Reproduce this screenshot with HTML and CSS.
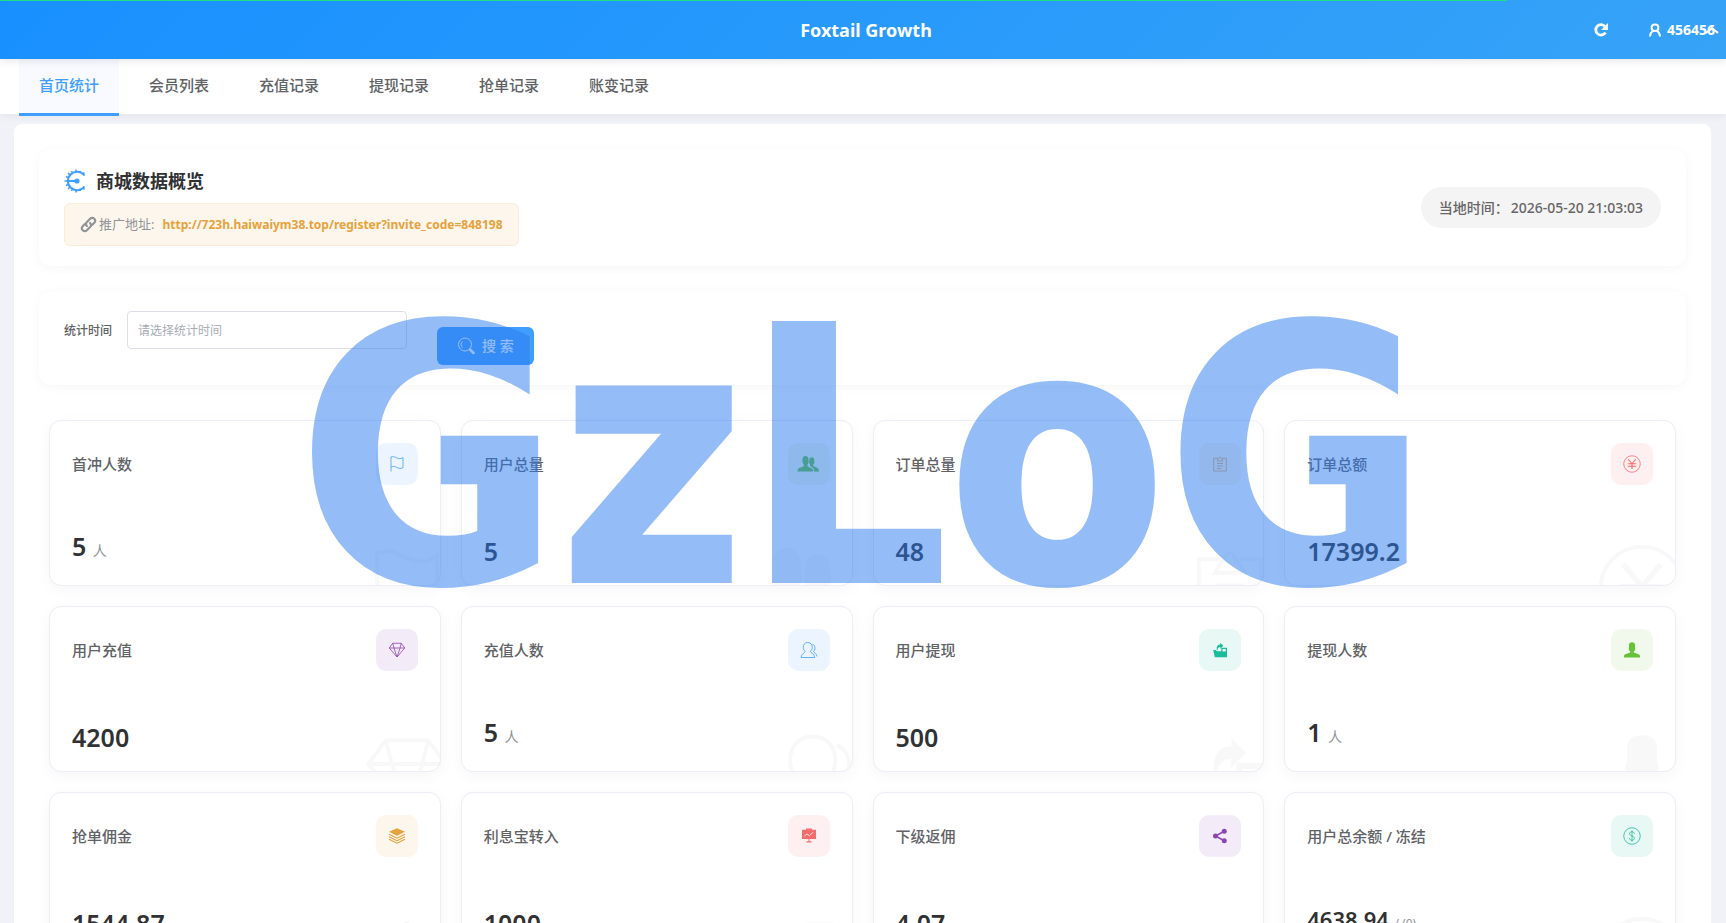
FILE: index.html
```html
<!DOCTYPE html>
<html lang="zh-CN">
<head>
    <meta charset="UTF-8">
    <meta name="viewport" content="width=device-width, initial-scale=1.0">
    <title>Foxtail Growth</title>
    <link rel="stylesheet" href="styles.css">
</head>
<body>
    <!-- icon set -->
    <svg class="sprite" aria-hidden="true">
        <symbol id="i-flag" viewBox="0 0 36 36">
            <path class="line" d="M6 33V4c5-1.500 8 0 12 2s8 2 12-1v20c-4 3-8 2-12 0s-7-3-12-1"/>
        </symbol>
        <symbol id="i-users" viewBox="0 0 50 36">
            <path d="M19 2c4 0 6 3 6 7 0 2-.2 3 .3 5-.3 2.500-1.300 3.500-2.300 5v3c1 2 8 3.500 10 6 1 1.200 1.300 3 1.300 5H3c0-2 .3-4 1.300-5.500C6 25.500 14 24 15.500 22v-3c-1-1.500-2-2.500-2.500-5 .3-2 0-3 0-5 0-4 2-7 6-7z"/>
            <path d="M31.500 4.500c3.500 0 5 2.500 5 6 0 2 .5 2.500.5 4-.3 2-1.300 3-2.300 4.500v3c1 1.500 7.500 2.500 9.500 5 1 1.200 1.800 3.500 1.800 6H36c0-3-.3-5-1.500-6.500-1.300-1.500-5-3-6.500-4.500v-3c-1-1.500-1.700-2.500-2-4.500.5-2 .5-2.500.5-4 0-3.500 1.500-6 5-6z"/>
        </symbol>
        <symbol id="i-order" viewBox="0 0 36 36">
            <path class="line" d="M14 6.500H5.500V32h25V6.500H22M12 12h12l-3-5h-1c0-4-4-4-4 0h-1zM12 17h12M12 22h12M12 27h9"/>
        </symbol>
        <symbol id="i-yen" viewBox="0 0 36 36">
            <path class="line" d="M1.500 18a16.500 16.500 0 1 0 33 0a16.500 16.500 0 1 0-33 0"/>
            <path class="line bold" d="M10.500 8.500L18 17.500l7.500-9M18 17.500V28M9.500 17.500h17M9.500 22.500h17"/>
        </symbol>
        <symbol id="i-diamond" viewBox="0 0 36 36">
            <path class="line" d="M9.500 4.500h17l7 9.500L18 32 2.500 14zM2.500 14h31M9.500 4.500L12.500 16 18 32M26.500 4.500L23.500 16 18 32"/>
        </symbol>
        <symbol id="i-member" viewBox="0 0 36 36">
            <path class="line" d="M15.500 3c5.500 0 9 4 9 9.500 0 4-1.500 6.500-4 8.500 0 2 9 5 9 12H2c0-7 8.500-10 8.500-12C8 19 6.500 16.500 6.500 12.500 6.500 7 10 3 15.500 3zM25 6.500c3 1 5 4 5 7.500 0 3-1 5-3 7 0 2.500 7 4 7 10"/>
        </symbol>
        <symbol id="i-withdraw" viewBox="0 0 36 36">
            <path d="M12.500 21C10 13 12 7 18.500 7V3.500l6 6-6 6V12c-4 0-6 3-6 9z"/>
            <path d="M20.500 13.500H32v19H7.500L4.500 18h5l2 2.500h9zM23 16v5h6.500v-5z" fill-rule="evenodd"/>
        </symbol>
        <symbol id="i-person" viewBox="0 0 36 36">
            <path d="M18 2.500c4 0 6 1.500 6 5.500v5c.8 1.500.8 3.500 0 5.500L21.500 21v2c3 1.500 12.500 3 12.500 6.500V33H2v-3.500C2 26 11.500 24.500 14.500 23v-2L12 18.500c-.8-2-.8-4 0-5.500V8c0-4 2-5.500 6-5.500z"/>
        </symbol>
        <symbol id="i-layers" viewBox="0 0 36 36">
            <path d="M18 2.500L34 9.500 18 17.500 2 9.500z"/>
            <path class="line bold" d="M2 14.500l16 8 16-8M2 19.500l16 8 16-8M2 24.500l16 8 16-8"/>
        </symbol>
        <symbol id="i-board" viewBox="0 0 36 36">
            <path d="M12 3h12v2.500h8V24H19v4.500h4V31H13v-2.500h4V24H4V5.500h8z"/>
            <path class="cut" d="M9 18l5-4 5 3.500 7-7"/>
        </symbol>
        <symbol id="i-share" viewBox="0 0 36 36">
            <circle cx="9" cy="18" r="5"/><circle cx="26.500" cy="8.500" r="5"/><circle cx="26.500" cy="27.500" r="5"/>
            <path class="heavy" d="M26.500 8.500L9 18l17.500 9.500"/>
        </symbol>
        <symbol id="i-dollar" viewBox="0 0 36 36">
            <path class="line" d="M1.500 18a16.500 16.500 0 1 0 33 0a16.500 16.500 0 1 0-33 0M18 7v22"/>
            <path class="line" d="M23 13.500c-.5-2.500-2.500-4-5-4-6 0-7 6.500 0 8.500s6 8.500 0 8.500c-3 0-5-1.500-5.500-4.500"/>
        </symbol>
    </svg>

    <div class="progress"></div>

    <header class="header">
        <h1 class="logo">Foxtail Growth</h1>
        <div class="header-tools">
            <button class="tool" type="button" aria-label="刷新">
                <svg class="tool-icon" viewBox="0 0 16 16"><path d="M12.500 10.500A5.200 5.200 0 1 1 12 4.500" fill="none" stroke="#fff" stroke-width="2.800"/><path d="M15 1v7H8z" fill="#fff"/></svg>
            </button>
            <a class="user" href="#">
                <svg class="tool-icon" viewBox="0 0 16 16" fill="none" stroke="#fff" stroke-width="2"><path d="M8 2.500c2.200 0 3.400 1.300 3.400 3.200S10.200 9 8 9 4.600 7.600 4.600 5.700 5.800 2.500 8 2.500zM6.200 8.700C4.500 9.700 3.200 11.500 3 14.500M9.800 8.700c1.700 1 3 2.800 3.200 5.800"/></svg>
                <span>456456</span>
                <svg class="caret" viewBox="0 0 14 8" fill="none" stroke="#fff" stroke-width="2"><path d="M1 7l6-5 6 5"/></svg>
            </a>
        </div>
    </header>

    <nav class="nav">
        <a class="nav-item active" href="#">首页统计</a>
        <a class="nav-item" href="#">会员列表</a>
        <a class="nav-item" href="#">充值记录</a>
        <a class="nav-item" href="#">提现记录</a>
        <a class="nav-item" href="#">抢单记录</a>
        <a class="nav-item" href="#">账变记录</a>
    </nav>

    <main class="content">
        <section class="panel overview">
            <div>
                <h2 class="overview-title">
                    <svg class="gauge" viewBox="0 0 24 24" fill="none" stroke="#409eff">
                        <path d="M20.500 6.500A9.200 9.200 0 1 0 20.500 17.500" stroke-width="2"/>
                        <path d="M12 3V.5M12 21v2.500M3 12H.5M5.600 5.600L4 4M5.600 18.400L4 20M18.400 5.600L20.500 3.500M18.400 18.400l2.100 2.100M8.500 4L7.500 2M15.500 4l1-2M8.500 20l-1 2M15.500 20l1 2M4 8.500l-2-1M4 15.500l-2 1" stroke-width="1.500"/>
                        <path d="M4 12h9" stroke-width="2"/><circle cx="13" cy="12" r="2.600" fill="#409eff" stroke="none"/>
                    </svg>
                    商城数据概览
                </h2>
                <div class="promo">
                    <svg class="link-icon" viewBox="0 0 16 16" fill="none" stroke="#909399" stroke-width="2" stroke-linecap="round"><path d="M6.500 9.500c-1.200-1.200-1-2.800 0-3.800l3-3c1.200-1.200 2.800-1.200 3.900-.1s1.100 2.700-.1 3.900l-2 2M9.500 6.500c1.200 1.200 1 2.800 0 3.800l-3 3c-1.200 1.200-2.800 1.200-3.900.1s-1.100-2.700.1-3.900l2-2"/></svg>
                    <span>推广地址:</span>
                    <a href="#">http://723h.haiwaiym38.top/register?invite_code=848198</a>
                </div>
            </div>
            <div class="clock"><span>当地时间：</span><time>2026-05-20 21:03:03</time></div>
        </section>

        <form class="panel search">
            <label for="range">统计时间</label>
            <input type="text" id="range" placeholder="请选择统计时间">
            <button type="button">
                <svg viewBox="0 0 18 18" fill="none" stroke="#fff"><circle cx="8" cy="7.500" r="6.500"/><path d="M5.500 4.500a4 4 0 0 0 0 6"/><path d="M13 12.500l3.500 3.500" stroke-width="2.500" stroke-linecap="round"/></svg>
                搜 索
            </button>
        </form>

        <section class="stats">
            <div class="stat blue">
                <div class="stat-head"><span>首冲人数</span><i class="badge"><svg><use href="#i-flag"/></svg></i></div>
                <div class="stat-value with-unit">5 <small>人</small></div>
                <svg class="ghost"><use href="#i-flag"/></svg>
            </div>
            <div class="stat green wide-icon">
                <div class="stat-head"><span>用户总量</span><i class="badge"><svg><use href="#i-users"/></svg></i></div>
                <div class="stat-value">5</div>
                <svg class="ghost"><use href="#i-users"/></svg>
            </div>
            <div class="stat orange">
                <div class="stat-head"><span>订单总量</span><i class="badge"><svg><use href="#i-order"/></svg></i></div>
                <div class="stat-value">48</div>
                <svg class="ghost"><use href="#i-order"/></svg>
            </div>
            <div class="stat red">
                <div class="stat-head"><span>订单总额</span><i class="badge"><svg><use href="#i-yen"/></svg></i></div>
                <div class="stat-value">17399.2</div>
                <svg class="ghost"><use href="#i-yen"/></svg>
            </div>

            <div class="stat purple">
                <div class="stat-head"><span>用户充值</span><i class="badge"><svg><use href="#i-diamond"/></svg></i></div>
                <div class="stat-value">4200</div>
                <svg class="ghost"><use href="#i-diamond"/></svg>
            </div>
            <div class="stat blue">
                <div class="stat-head"><span>充值人数</span><i class="badge"><svg><use href="#i-member"/></svg></i></div>
                <div class="stat-value with-unit">5 <small>人</small></div>
                <svg class="ghost"><use href="#i-member"/></svg>
            </div>
            <div class="stat teal">
                <div class="stat-head"><span>用户提现</span><i class="badge"><svg><use href="#i-withdraw"/></svg></i></div>
                <div class="stat-value">500</div>
                <svg class="ghost"><use href="#i-withdraw"/></svg>
            </div>
            <div class="stat green">
                <div class="stat-head"><span>提现人数</span><i class="badge"><svg><use href="#i-person"/></svg></i></div>
                <div class="stat-value with-unit">1 <small>人</small></div>
                <svg class="ghost"><use href="#i-person"/></svg>
            </div>

            <div class="stat orange">
                <div class="stat-head"><span>抢单佣金</span><i class="badge"><svg><use href="#i-layers"/></svg></i></div>
                <div class="stat-value">1544.87</div>
                <svg class="ghost"><use href="#i-layers"/></svg>
            </div>
            <div class="stat red">
                <div class="stat-head"><span>利息宝转入</span><i class="badge"><svg><use href="#i-board"/></svg></i></div>
                <div class="stat-value">1000</div>
                <svg class="ghost"><use href="#i-board"/></svg>
            </div>
            <div class="stat purple">
                <div class="stat-head"><span>下级返佣</span><i class="badge"><svg><use href="#i-share"/></svg></i></div>
                <div class="stat-value">4.07</div>
                <svg class="ghost"><use href="#i-share"/></svg>
            </div>
            <div class="stat teal">
                <div class="stat-head"><span>用户总余额 / 冻结</span><i class="badge"><svg><use href="#i-dollar"/></svg></i></div>
                <div class="stat-value with-note">4638.94 <small>/ (0)</small></div>
                <svg class="ghost"><use href="#i-dollar"/></svg>
            </div>
        </section>
    </main>

    <div class="watermark">GzLoG</div>
</body>
</html>
```
FILE: styles.css
```css
* {
    box-sizing: border-box;
}
html {
    scrollbar-width: none;
}
body {
    margin: 0;
    background: #f0f2f7;
    color: #303133;
    font-family: "Noto Sans", "Noto Sans CJK SC", sans-serif;
    font-size: 14px;
    line-height: 21px;
}
h1, h2 {
    margin: 0;
}
a {
    color: inherit;
    text-decoration: none;
}
.sprite {
    position: absolute;
    width: 0;
    height: 0;
}
.progress {
    position: fixed;
    top: 0;
    left: 0;
    z-index: 20;
    width: 87.3%;
    height: 1px;
    background: #1fdf83;
}

/* header */
.header {
    position: relative;
    z-index: 2;
    display: flex;
    align-items: center;
    justify-content: center;
    height: 59px;
    padding-left: 6px;
    background: linear-gradient(135deg, #1890ff, #36a3f7);
    box-shadow: 0 2px 8px rgba(0, 0, 0, 0.1);
    color: #fff;
}
.logo {
    font-size: 18px;
    font-weight: 700;
    line-height: 24px;
}
.header-tools {
    position: absolute;
    right: 6px;
    display: flex;
    align-items: center;
    gap: 38px;
}
.tool {
    display: flex;
    padding: 0;
    border: none;
    background: none;
    cursor: pointer;
}
.tool-icon {
    width: 16px;
    height: 16px;
}
.user {
    position: relative;
    display: flex;
    align-items: center;
    gap: 4px;
    padding-right: 5px;
    font-weight: 700;
}
.caret {
    position: absolute;
    right: 1px;
    width: 14px;
    height: 8px;
}

/* nav */
.nav {
    display: flex;
    gap: 10px;
    height: 55px;
    padding: 0 19px;
    background: #fff;
    box-shadow: 0 2px 8px rgba(0, 0, 0, 0.06);
}
.nav-item {
    height: 57px;
    padding: 0 20px;
    border-bottom: 3px solid transparent;
    color: #606266;
    font-size: 15px;
    font-weight: 500;
    line-height: 52px;
}
.nav-item.active {
    border-color: #409eff;
    background: #f8faff;
    color: #409eff;
}

/* content */
.content {
    margin: 10px 15px 0 14px;
    padding: 25px;
    border-radius: 8px;
    background: #fff;
}
.panel {
    margin-bottom: 25px;
    padding: 20px 25px;
    border-radius: 12px;
    background: #fff;
    box-shadow: 0 2px 12px rgba(0, 0, 0, 0.04);
}
.overview {
    display: flex;
    align-items: center;
    justify-content: space-between;
}
.overview-title {
    display: flex;
    align-items: center;
    gap: 8px;
    margin-bottom: 10px;
    font-size: 18px;
    font-weight: 600;
    line-height: 24px;
}
.gauge {
    width: 24px;
    height: 24px;
}
.promo {
    display: flex;
    align-items: center;
    gap: 8px;
    width: fit-content;
    padding: 10px 15px;
    border: 1px solid #faecd8;
    border-radius: 6px;
    background: #fdf6ec;
    color: #909399;
    font-size: 13px;
}
.promo a {
    color: #e6a23c;
    font-size: 12px;
    font-weight: 700;
}
.link-icon {
    width: 17px;
    height: 17px;
    margin-right: -6px;
}
.clock {
    display: flex;
    gap: 2px;
    padding: 10px 18px;
    border-radius: 21px;
    background: #f4f4f4;
    color: #666;
    font-weight: 500;
}

/* search */
.search {
    display: flex;
    align-items: flex-start;
    height: 94px;
    font-size: 12px;
}
.search label {
    padding-right: 15px;
    color: #606266;
    font-weight: 500;
    line-height: 40px;
}
.search input {
    width: 280px;
    height: 38px;
    margin-right: 30px;
    padding: 0 10px;
    border: 1px solid #dcdfe6;
    border-radius: 4px;
    background: transparent;
    font: inherit;
}
.search input::placeholder {
    color: #a8abb2;
}
.search button {
    display: flex;
    align-items: center;
    gap: 7px;
    height: 38px;
    margin-top: 16px;
    padding: 0 20px;
    border: none;
    border-radius: 6px;
    background: #409eff;
    color: #fff;
    font: 500 14px/36px "Noto Sans", "Noto Sans CJK SC", sans-serif;
    cursor: pointer;
}
.search button svg {
    width: 18px;
    height: 18px;
}

/* stat cards */
.stats {
    display: grid;
    grid-template-columns: repeat(4, 1fr);
    gap: 20px;
    padding: 10px;
}
.stat {
    position: relative;
    display: flex;
    flex-direction: column;
    justify-content: space-between;
    height: 166px;
    padding: 22px;
    overflow: hidden;
    border: 1px solid #ebedf7;
    border-radius: 12px;
    background: #fff;
    box-shadow: 0 4px 16px rgba(0, 0, 0, 0.04);
}
.stat-head {
    display: flex;
    align-items: center;
    justify-content: space-between;
    color: #606266;
    font-size: 15px;
    font-weight: 500;
}
.badge {
    display: flex;
    align-items: center;
    justify-content: center;
    width: 42px;
    height: 42px;
    border-radius: 10px;
}
.badge svg {
    width: 18px;
    height: 18px;
}
.stat-value {
    font-size: 25px;
    font-weight: 600;
    line-height: 24px;
}
.stat-value.with-unit {
    line-height: 34px;
}
.stat-value.with-note {
    font-size: 22px;
    line-height: 32px;
}
.stat-value small {
    color: #909399;
    font-size: 14px;
    font-weight: 400;
    line-height: 14px;
}
.stat-value.with-note small {
    font-size: 12px;
}
.ghost {
    position: absolute;
    right: -12px;
    bottom: -48px;
    width: 90px;
    height: 90px;
    color: #303133;
    opacity: 0.03;
}
.wide-icon .badge svg {
    width: 25px;
}
.wide-icon .ghost {
    width: 125px;
}
.stat svg {
    flex: none;
    fill: currentColor;
}
.line, .heavy {
    fill: none;
    stroke: currentColor;
    stroke-width: 1.6px;
}
.bold {
    stroke-width: 2.2px;
}
.heavy {
    stroke-width: 3px;
}
.cut {
    fill: none;
    stroke: #fff;
    stroke-width: 1.6px;
}
.blue .badge {
    background: #ecf5ff;
    color: #409eff;
}
.green .badge {
    background: #f0f9eb;
    color: #67c23a;
}
.orange .badge {
    background: #fdf6ec;
    color: #e6a23c;
}
.red .badge {
    background: #fef0f0;
    color: #f56c6c;
}
.purple .badge {
    background: #f3ebf7;
    color: #8e44ad;
}
.teal .badge {
    background: #e8f8f5;
    color: #1abc9c;
}

.watermark {
    position: fixed;
    inset: 0;
    z-index: 30;
    display: flex;
    align-items: center;
    justify-content: center;
    padding-bottom: 8px;
    color: #2b7bef;
    font-family: "DejaVu Sans Condensed", "DejaVu Sans", sans-serif;
    font-size: 354px;
    font-weight: 900;
    line-height: 1;
    opacity: 0.5;
    pointer-events: none;
    -webkit-text-stroke: 4px #2b7bef;
}
```
